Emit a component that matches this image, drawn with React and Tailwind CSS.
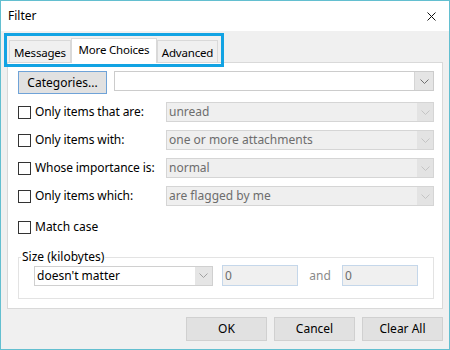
import React from "react";

const font = { fontFamily: '"Noto Sans", "Open Sans", sans-serif' };

function Chevron({ color = "#606060" }) {
  return (
    <svg width="9" height="5" viewBox="0 0 9 5" fill="none">
      <path d="M0.5 0.5 L4.5 4.5 L8.5 0.5" stroke={color} strokeWidth="1" />
    </svg>
  );
}

function Checkbox() {
  return <div className="w-[13px] h-[13px] border border-[#333333] bg-white shrink-0" />;
}

function DisabledSelect({ value }) {
  return (
    <div className="flex-1 h-[20px] border border-[#d5d5d5] bg-[#efefef] flex items-stretch">
      <div className="flex-1 pl-[2px] flex items-center text-[#6d6d6d] text-[12px] leading-none">{value}</div>
      <div className="w-[16px] bg-[#e3e3e3] flex items-center justify-center">
        <Chevron color="#c4c4c4" />
      </div>
    </div>
  );
}

function Row({ label, value, mt = "mt-[8px]" }) {
  return (
    <div className={`flex items-center h-[20px] ${mt}`}>
      <div className="w-[148px] flex items-center gap-[4px]">
        <Checkbox />
        <span className="text-[12px] leading-none text-black tracking-[-0.1px]">{label}</span>
      </div>
      <DisabledSelect value={value} />
    </div>
  );
}

export default function App() {
  return (
    <div
      className="relative w-[450px] h-[350px] border border-[#63bfd0] bg-[#f0f0f0] flex flex-col text-black"
      style={font}
    >
      {/* title bar */}
      <div className="h-[30px] bg-white flex items-center justify-between pl-[7px] pr-[13px] shrink-0">
        <span className="text-[12px] leading-none">Filter</span>
        <svg width="9" height="9" viewBox="0 0 9 9">
          <path d="M0.5 0.5 L8.5 8.5 M8.5 0.5 L0.5 8.5" stroke="#111" strokeWidth="1" />
        </svg>
      </div>

      {/* body */}
      <div className="flex flex-col px-[6px] pt-[7px]">
        {/* tabs */}
        <div className="flex items-end h-[24px] pl-[2px]">
          <div className="w-[62px] h-[22px] border border-b-0 border-[#d9d9d9] bg-[#f0f0f0] flex items-center justify-center text-[11.5px] tracking-[-0.2px] leading-none pt-[3px]">
            Messages
          </div>
          <div className="relative z-10 w-[86px] h-[25px] -mb-px border border-b-0 border-[#d9d9d9] bg-white flex items-center justify-center text-[11.5px] tracking-[-0.2px] leading-none pb-[3px]">
            More Choices
          </div>
          <div className="w-[61px] h-[22px] border border-b-0 border-[#d9d9d9] bg-[#f0f0f0] flex items-center justify-center text-[11.5px] tracking-[-0.2px] leading-none pt-[3px]">
            Advanced
          </div>
        </div>

        {/* panel */}
        <div className="h-[247px] border border-[#d9d9d9] bg-white pl-[10px] pr-[8px] pt-[8px] flex flex-col">
          <div className="flex items-start gap-[7px]">
            <div className="w-[89px] h-[23px] border border-[#6fa3d8] bg-[#e1e1e1] flex items-center justify-center text-[12px] leading-none">
              Categories...
            </div>
            <div className="flex-1 h-[20px] border border-[#cccccc] bg-white flex justify-end">
              <div className="w-[19px] bg-[#e5e5e5] border-l border-[#d5d5d5] flex items-center justify-center">
                <Chevron color="#707070" />
              </div>
            </div>
          </div>

          <Row label="Only items that are:" value="unread" />
          <Row label="Only items with:" value="one or more attachments" />
          <Row label="Whose importance is:" value="normal" />
          <Row label="Only items which:" value="are flagged by me" />

          <div className="flex items-center h-[20px] mt-[11px] gap-[4px]">
            <Checkbox />
            <span className="text-[12px] leading-none">Match case</span>
          </div>

          <fieldset className="mt-[13px] border border-[#e3e3e3] px-0 pb-[12px] pt-0">
            <legend className="ml-[2px] px-[1px] text-[12px] leading-[14px]">Size (kilobytes)</legend>
            <div className="flex items-center pl-[15px] pt-[1px]">
              <div className="w-[179px] h-[20px] border border-[#d0d0d0] bg-white flex items-stretch">
                <div className="flex-1 pl-[2px] flex items-center text-[12px] leading-none">doesn't matter</div>
                <div className="w-[17px] bg-[#e5e5e5] flex items-center justify-center">
                  <Chevron color="#a0a0a0" />
                </div>
              </div>
              <div className="ml-[9px] w-[76px] h-[21px] border border-[#c5d7ea] bg-[#f0f0f0] pl-[2px] flex items-center text-[12px] leading-none text-[#6d6d6d]">
                0
              </div>
              <div className="w-[44px] text-center text-[12px] leading-none text-[#8a8a8a]">and</div>
              <div className="w-[76px] h-[21px] border border-[#c5d7ea] bg-[#f0f0f0] pl-[2px] flex items-center text-[12px] leading-none text-[#6d6d6d]">
                0
              </div>
            </div>
          </fieldset>
        </div>

        {/* buttons */}
        <div className="flex justify-end gap-[7px] mt-[8px]">
          {["OK", "Cancel", "Clear All"].map((t) => (
            <div
              key={t}
              className="w-[81px] h-[24px] border border-[#d0d0d0] bg-[#e1e1e1] flex items-center justify-center text-[12px] leading-none"
            >
              {t}
            </div>
          ))}
        </div>
      </div>

      {/* annotation highlight */}
      <div className="absolute left-[3px] top-[32px] w-[220px] h-[34px] border-[3px] border-[#12a3e3] pointer-events-none z-20" />
    </div>
  );
}
